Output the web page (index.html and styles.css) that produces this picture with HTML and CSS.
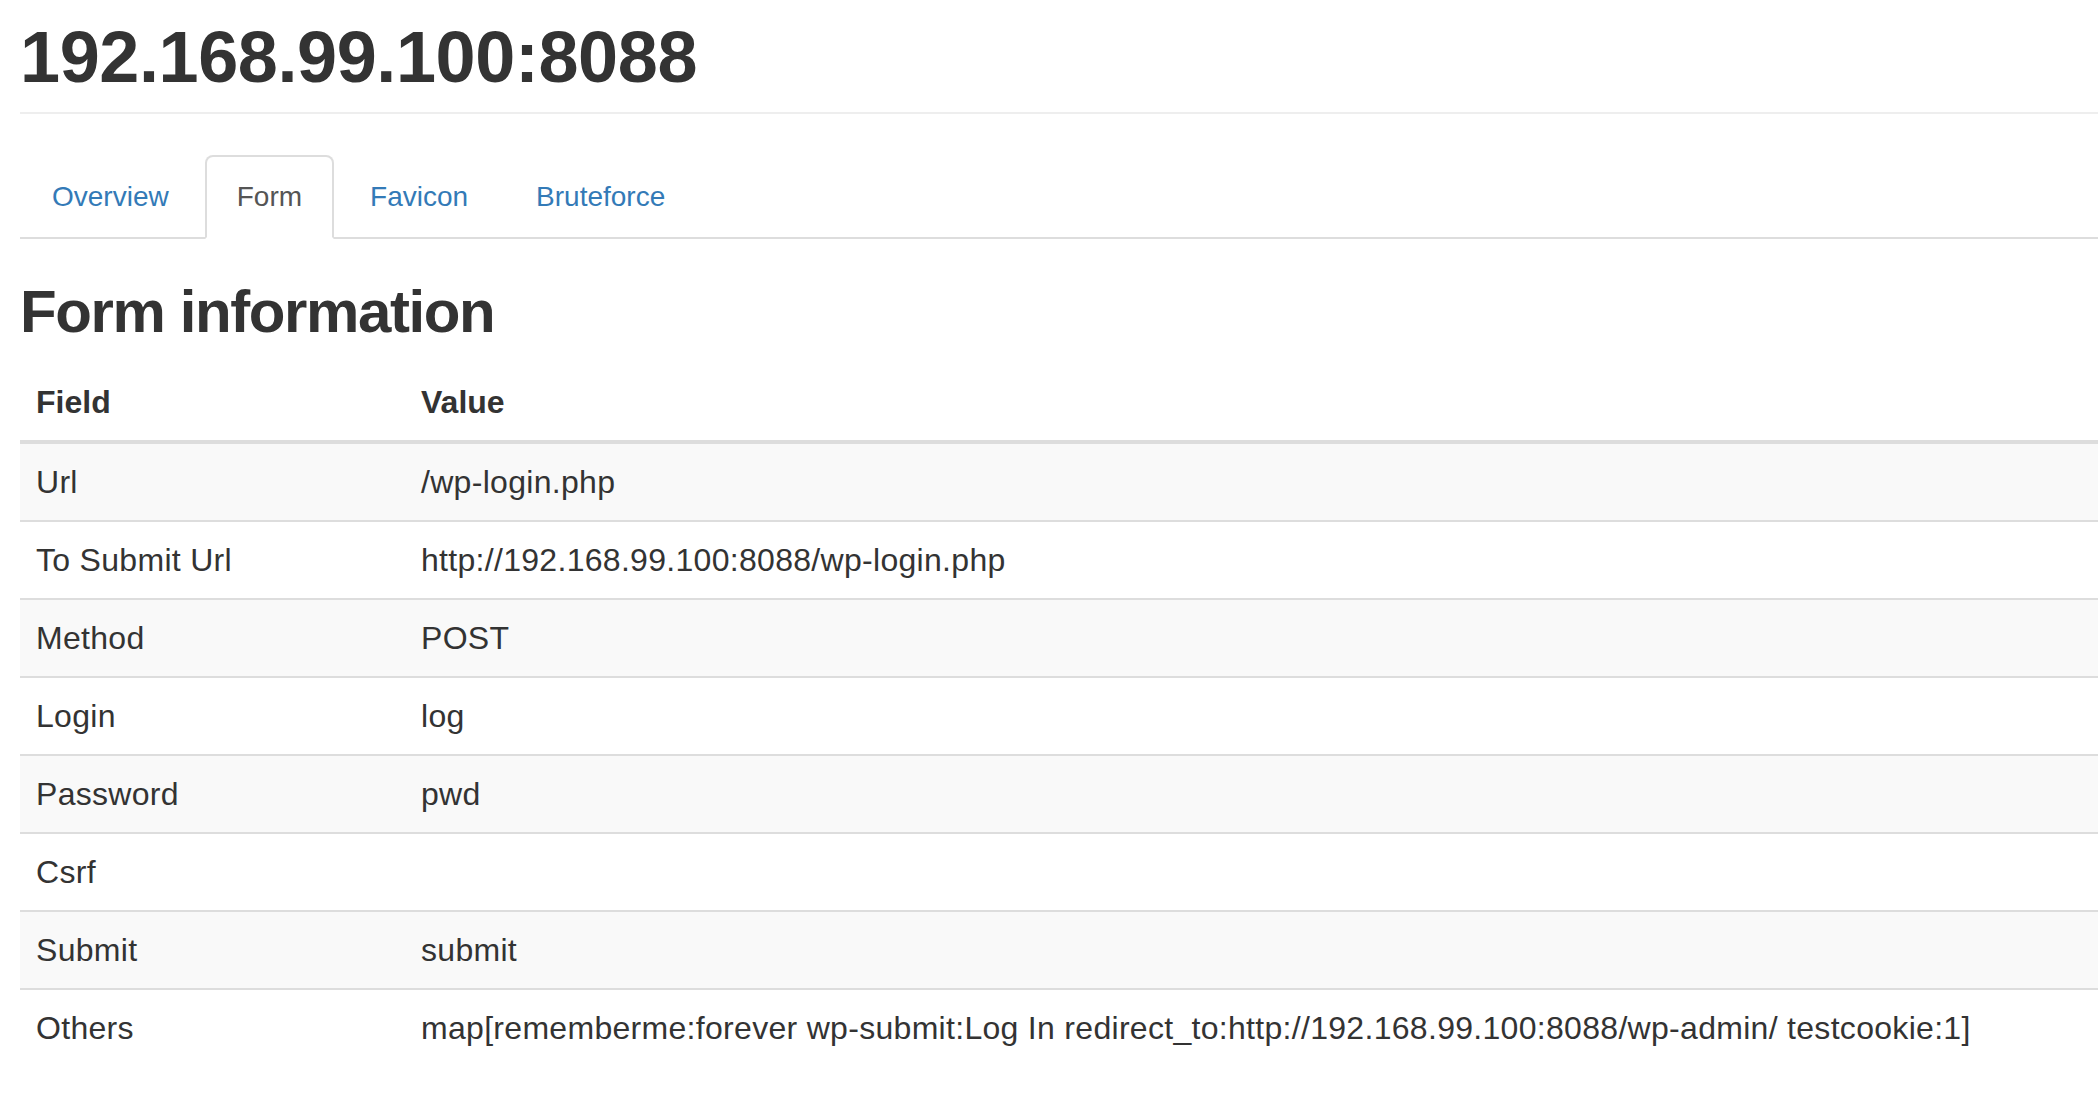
FILE: index.html
```html
<!DOCTYPE html>
<html lang="en">
<head>
<meta charset="utf-8">
<title>192.168.99.100:8088</title>
<link rel="stylesheet" href="styles.css">
</head>
<body>
<div class="page">
  <div class="page-header">
    <h1 class="title">192.168.99.100:8088</h1>
  </div>
  <ul class="tabs">
    <li class="tab"><a href="#">Overview</a></li>
    <li class="tab active"><a href="#">Form</a></li>
    <li class="tab"><a href="#">Favicon</a></li>
    <li class="tab"><a href="#">Bruteforce</a></li>
  </ul>
  <h2 class="section-title">Form information</h2>
  <table class="info-table">
    <thead>
      <tr><th class="col-field">Field</th><th>Value</th></tr>
    </thead>
    <tbody>
      <tr><td>Url</td><td>/wp-login.php</td></tr>
      <tr><td>To Submit Url</td><td>http://192.168.99.100:8088/wp-login.php</td></tr>
      <tr><td>Method</td><td>POST</td></tr>
      <tr><td>Login</td><td>log</td></tr>
      <tr><td>Password</td><td>pwd</td></tr>
      <tr><td>Csrf</td><td></td></tr>
      <tr><td>Submit</td><td>submit</td></tr>
      <tr><td>Others</td><td>map[rememberme:forever wp-submit:Log In redirect_to:http://192.168.99.100:8088/wp-admin/ testcookie:1]</td></tr>
    </tbody>
  </table>
</div>
</body>
</html>
```
FILE: styles.css
```css
html, body {
  margin: 0;
  padding: 0;
  background: #fff;
}
body {
  font-family: "Liberation Sans", Arial, Helvetica, sans-serif;
  color: #333;
}
.page {
  padding: 0 0 0 20px;
}
.page-header {
  padding: 18px 0 15px 0;
  border-bottom: 2px solid #eee;
  margin: 0 0 41px 0;
}
.title {
  margin: 0;
  font-size: 72px;
  line-height: 79px;
  font-weight: bold;
  letter-spacing: -0.4px;
  padding-left: 0;
}
.tabs {
  display: flex;
  list-style: none;
  margin: 0;
  padding: 0;
  border-bottom: 2px solid #ddd;
}
.tab {
  margin-bottom: -2px;
}
.tab a {
  display: block;
  padding: 20px 30px;
  margin-right: 4px;
  line-height: 40px;
  font-size: 28px;
  color: #337ab7;
  text-decoration: none;
  border: 2px solid transparent;
  border-radius: 8px 8px 0 0;
}
.tab.active a {
  color: #555;
  background: #fff;
  border-color: #ddd #ddd transparent;
}
.section-title {
  margin: 40px 0 19px 0;
  font-size: 60px;
  line-height: 66px;
  font-weight: bold;
  letter-spacing: -1.4px;
  padding-left: 0;
}
.info-table {
  width: 100%;
  border-collapse: collapse;
  font-size: 32px;
  letter-spacing: 0.3px;
}
.info-table th,
.info-table td {
  padding: 16px;
  line-height: 44px;
  text-align: left;
  vertical-align: top;
  white-space: nowrap;
}
.info-table th {
  font-weight: bold;
  border-bottom: 4px solid #ddd;
  letter-spacing: 0;
}
.info-table td {
  border-top: 2px solid #ddd;
}
.info-table .col-field {
  width: 353px;
}
.info-table tbody tr:nth-child(odd) {
  background: #f9f9f9;
}
```
